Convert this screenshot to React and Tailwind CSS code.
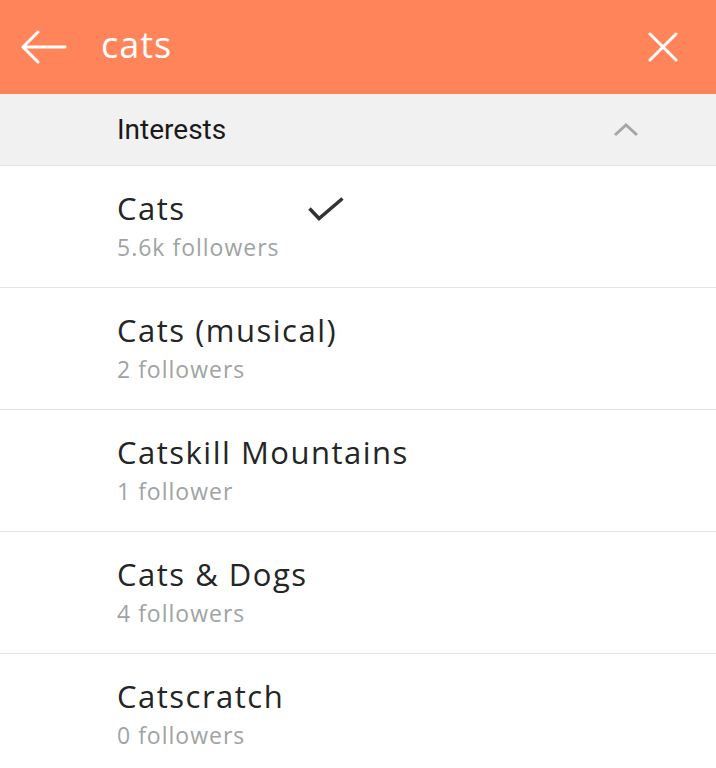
import React from "react";

const items = [
  { name: "Cats", sub: "5.6k followers", checked: true },
  { name: "Cats (musical)", sub: "2 followers" },
  { name: "Catskill Mountains", sub: "1 follower" },
  { name: "Cats & Dogs", sub: "4 followers" },
  { name: "Catscratch", sub: "0 followers" },
];

export default function App() {
  return (
    <div className="w-[716px] h-[768px] overflow-hidden bg-white" style={{ fontFamily: "'Open Sans', sans-serif" }}>
      <div className="h-[94px] bg-[#ff8459] flex items-center">
        <div className="w-[101px] pl-[20px] flex items-center">
          <svg width="48" height="36" viewBox="0 0 48 36" fill="none" stroke="white" strokeWidth="3" strokeLinecap="round" strokeLinejoin="round">
            <path d="M45 18H4M18 3L3 18l15 15" />
          </svg>
        </div>
        <div className="flex-1 text-white text-[36px] leading-none tracking-[1px] pb-[4px]">cats</div>
        <div className="pr-[38px]">
          <svg width="30" height="30" viewBox="0 0 30 30" fill="none" stroke="white" strokeWidth="3" strokeLinecap="round">
            <path d="M2 2l26 26M28 2L2 28" />
          </svg>
        </div>
      </div>
      <div className="h-[72px] bg-[#f1f1f1] border-b border-[#e3e3e3] flex items-center pl-[117px] pr-[77px]">
        <div className="flex-1 text-[28px] text-[#1a1a1a]" style={{ fontFamily: "Roboto, sans-serif" }}>Interests</div>
        <svg width="26" height="14" viewBox="0 0 26 14" fill="none" stroke="#a6a6a6" strokeWidth="3">
          <path d="M2 12L13 2l11 10" />
        </svg>
      </div>
      {items.map((it, i) => (
        <div key={i} className="h-[122px] border-b border-[#e3e3e3] pl-[117px] pt-[22px] flex">
          <div>
            <div className="text-[31px] leading-[40px] tracking-[1.5px] text-[#232625]">{it.name}</div>
            <div className="mt-[2px] text-[23px] leading-[34px] tracking-[1px] text-[#a0a3a3]">{it.sub}</div>
          </div>
          {it.checked && (
            <svg className="ml-[28px] mt-[9px]" width="36" height="25" viewBox="0 0 36 25" fill="none" stroke="#333" strokeWidth="3.5">
              <path d="M1.5 11.5L11 21.5L34.5 1.5" />
            </svg>
          )}
        </div>
      ))}
    </div>
  );
}
